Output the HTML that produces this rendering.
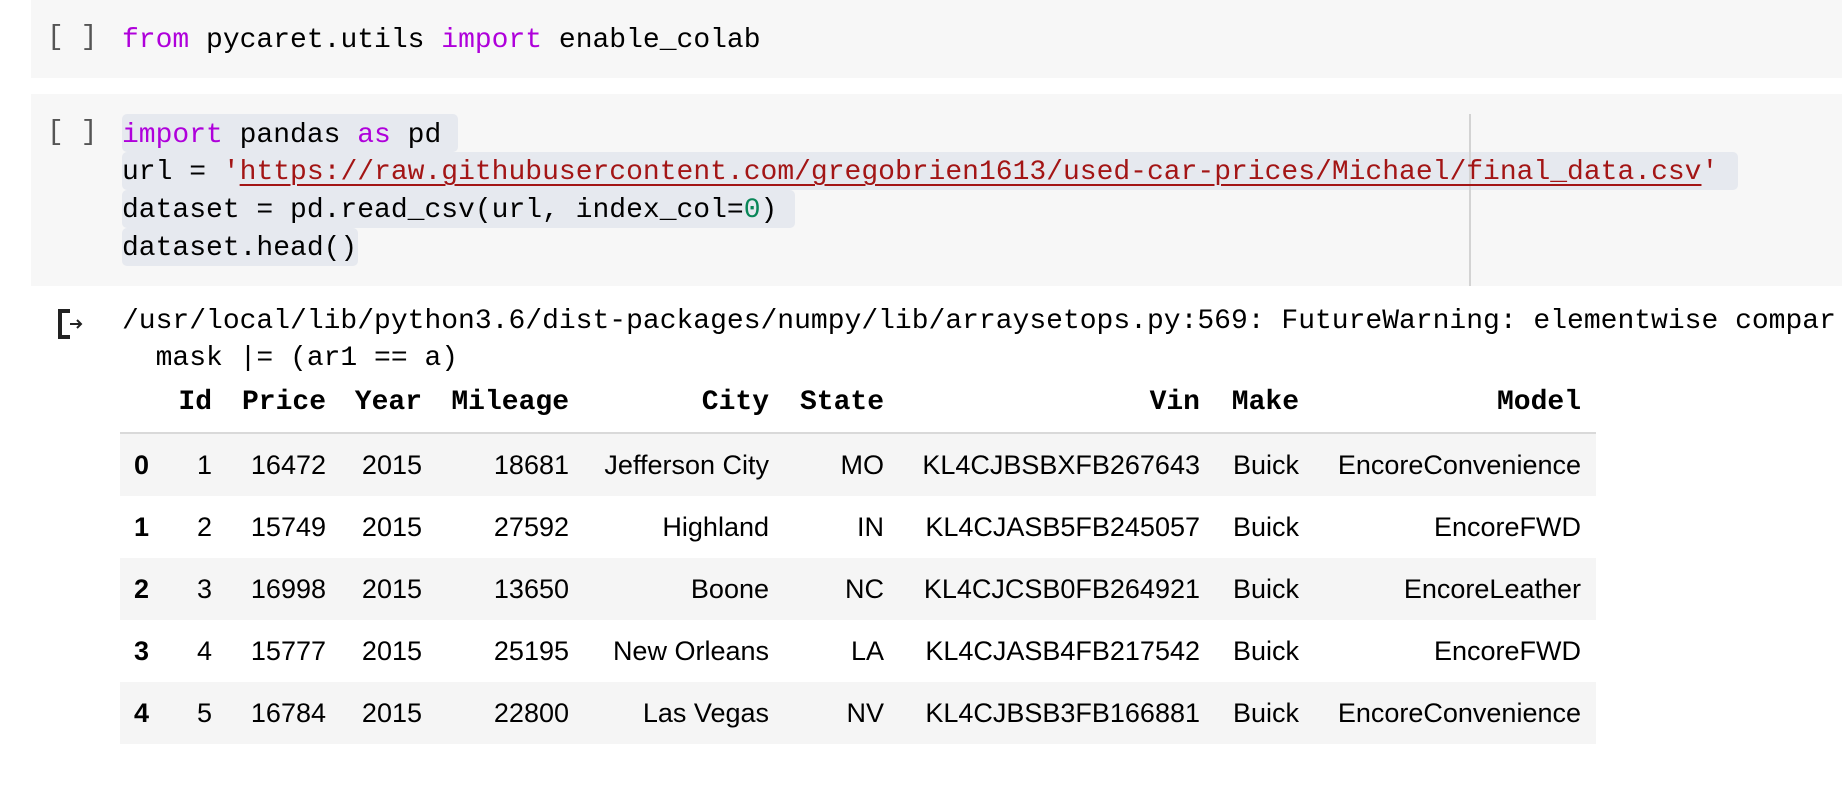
<!DOCTYPE html>
<html><head><meta charset="utf-8"><style>
html,body{margin:0;padding:0;width:1842px;height:808px;overflow:hidden;background:#fff;position:relative}
.mono{font-family:"Liberation Mono",monospace;font-size:28px;color:#000;white-space:pre}
.cell{position:absolute;left:31px;right:0;background:#f7f7f7}
.br{position:absolute;left:47px;color:#555;font-family:"Liberation Mono",monospace;font-size:28px;white-space:pre}
.ln{position:absolute;left:122px;height:38px;line-height:38px}
.hl{position:absolute;left:122px;background:#e6e9ef;border-radius:5px}
.k{color:#af00db}.s{color:#a31515}.n{color:#098658}
.u{text-decoration:underline;text-decoration-thickness:2px;text-underline-offset:5px}
.row{position:absolute;left:120px;width:1476px;height:62px}
.t{position:absolute;font-family:"Liberation Sans",sans-serif;font-size:27px;color:#000;white-space:pre;line-height:62px}
.h{position:absolute;font-family:"Liberation Mono",monospace;font-weight:bold;font-size:28px;white-space:pre;top:386px;line-height:34px}
</style></head><body>
<div style="position:absolute;left:0;top:0;width:1842px;height:808px;overflow:hidden">
<div class="cell" style="top:0;height:78px"></div>
<div class="br" style="top:22px">[ ]</div>
<div class="mono ln" style="top:22px"><span class="k">from</span> pycaret.utils <span class="k">import</span> enable_colab</div>

<div class="cell" style="top:94px;height:192px"></div>
<div class="hl" style="top:114px;width:336px;height:38px"></div>
<div class="hl" style="top:152px;width:1616px;height:38px"></div>
<div class="hl" style="top:190px;width:673px;height:38px"></div>
<div class="hl" style="top:228px;width:236px;height:38px"></div>
<div style="position:absolute;left:1469px;top:114px;width:2px;height:172px;background:#d3d3d3"></div>
<div class="br" style="top:117px">[ ]</div>
<div class="mono ln" style="top:117px"><span class="k">import</span> pandas <span class="k">as</span> pd</div>
<div class="mono ln" style="top:154px">url = <span class="s">'<span class="u">https://raw.githubusercontent.com/gregobrien1613/used-car-prices/Michael/final_data.csv</span>'</span></div>
<div class="mono ln" style="top:192px">dataset = pd.read_csv(url, index_col=<span class="n">0</span>)</div>
<div class="mono ln" style="top:230px">dataset.head()</div>

<svg style="position:absolute;left:57px;top:309px" width="34" height="30" viewBox="0 0 34 30"><path d="M13 2H3V28H13" fill="none" stroke="#222" stroke-width="4"/><path d="M13 15H24M20 11L24 15L20 19" fill="none" stroke="#222" stroke-width="2"/></svg>
<div class="mono ln" style="top:303px;left:122px">/usr/local/lib/python3.6/dist-packages/numpy/lib/arraysetops.py:569: FutureWarning: elementwise compar</div>
<div class="mono ln" style="top:340px;left:122px">  mask |= (ar1 == a)</div>

<div class="h" style="right:1630px">Id</div>
<div class="h" style="right:1516px">Price</div>
<div class="h" style="right:1420px">Year</div>
<div class="h" style="right:1273px">Mileage</div>
<div class="h" style="right:1073px">City</div>
<div class="h" style="right:958px">State</div>
<div class="h" style="right:642px">Vin</div>
<div class="h" style="right:543px">Make</div>
<div class="h" style="right:261px">Model</div>
<div style="position:absolute;left:120px;top:432px;width:1476px;height:2px;background:#d9d9d9"></div>

<div class="row" style="top:434px;background:#f5f5f5"></div>
<div class="row" style="top:496px"></div>
<div class="row" style="top:558px;background:#f5f5f5"></div>
<div class="row" style="top:620px"></div>
<div class="row" style="top:682px;background:#f5f5f5"></div>

<div id="tb"></div>
</div>
<script>
var rows=[["0","1","16472","2015","18681","Jefferson City","MO","KL4CJBSBXFB267643","Buick","EncoreConvenience"],
["1","2","15749","2015","27592","Highland","IN","KL4CJASB5FB245057","Buick","EncoreFWD"],
["2","3","16998","2015","13650","Boone","NC","KL4CJCSB0FB264921","Buick","EncoreLeather"],
["3","4","15777","2015","25195","New Orleans","LA","KL4CJASB4FB217542","Buick","EncoreFWD"],
["4","5","16784","2015","22800","Las Vegas","NV","KL4CJBSB3FB166881","Buick","EncoreConvenience"]];
var rights=[212,326,422,569,769,884,1200,1299,1581];
var h="";
rows.forEach(function(r,i){var top=434+i*62;
h+='<div class="t" style="left:134px;top:'+top+'px;font-weight:bold">'+r[0]+'</div>';
for(var j=1;j<r.length;j++){h+='<div class="t" style="right:'+(1842-rights[j-1])+'px;top:'+top+'px">'+r[j]+'</div>';}
});
document.getElementById("tb").innerHTML=h;
</script>
</body></html>
